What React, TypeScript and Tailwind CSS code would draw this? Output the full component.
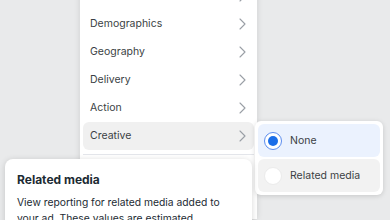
import React from 'react';

const Chevron = () => (
    <svg width="7" height="12" viewBox="0 0 7 12" fill="none" className="shrink-0">
        <path d="M1 1l5 5-5 5" stroke="#9a9fa6" strokeWidth="1.1" strokeLinecap="round" strokeLinejoin="round" />
    </svg>
);

// first row is scrolled mostly out of view, only its chevron shows
const menuItems = ['', 'Demographics', 'Geography', 'Delivery', 'Action', 'Creative'];

const Radio = ({ checked }: { checked: boolean }) =>
    checked ? (
        <span className="flex h-[18px] w-[18px] shrink-0 items-center justify-center rounded-full border-[1.5px] border-[#5b8def] bg-white">
            <span className="h-[10px] w-[10px] rounded-full bg-[#1b6ee8]" />
        </span>
    ) : (
        <span className="h-[18px] w-[18px] shrink-0 rounded-full border border-[#ebebeb] bg-white" />
    );

export default function App() {
    const options = [
        { label: 'None', checked: true },
        { label: 'Related media', checked: false },
    ];

    return (
        <div className="relative h-[220px] w-[390px] overflow-hidden bg-[#e9eaeb] font-['Inter',sans-serif] text-[#1c2b33]">
            {/* breakdown menu */}
            <div className="ml-[80px] mt-[-18px] w-[177px] bg-white px-[3px] pb-[60px] shadow-[0_0_6px_rgba(0,0,0,0.12)]">
                {menuItems.map((name, i) => (
                    <div
                        key={i}
                        className={`flex h-[28px] items-center justify-between rounded-[6px] pl-[7px] pr-[8px] text-[10.5px] text-[#3b3f44] ${
                            name === 'Creative' ? 'bg-[#f0f0f0]' : ''
                        }`}
                    >
                        <span>{name}</span>
                        <Chevron />
                    </div>
                ))}
                <div className="my-[4px] h-px bg-[#e4e6eb]" />
            </div>

            {/* submenu */}
            <div className="absolute left-[255px] top-[121px] flex w-[128px] flex-col gap-[2px] rounded-[6px] bg-white p-[3px] shadow-[0_1px_5px_rgba(0,0,0,0.15)]">
                {options.map((o) => (
                    <div
                        key={o.label}
                        className={`flex h-[33px] items-center gap-[8px] rounded-[6px] pl-[6px] text-[10.5px] text-[#3b3f44] ${
                            o.checked ? 'bg-[#ebf2fe]' : 'bg-[#f2f2f2]'
                        }`}
                    >
                        <Radio checked={o.checked} />
                        <span>{o.label}</span>
                    </div>
                ))}
            </div>

            {/* tooltip */}
            <div className="absolute left-[5px] top-[159px] h-[90px] w-[247px] rounded-[8px] bg-white px-[12px] pt-[13px] shadow-[0_1px_6px_rgba(0,0,0,0.16)]">
                <h3 className="text-[12px] font-bold leading-[16px] text-[#1c2b33]">Related media</h3>
                <p className="mt-[6px] w-[212px] text-[10.3px] leading-[16px] text-[#1c2b33]">
                    View reporting for related media added to your ad. These values are estimated.
                </p>
            </div>
        </div>
    );
}
